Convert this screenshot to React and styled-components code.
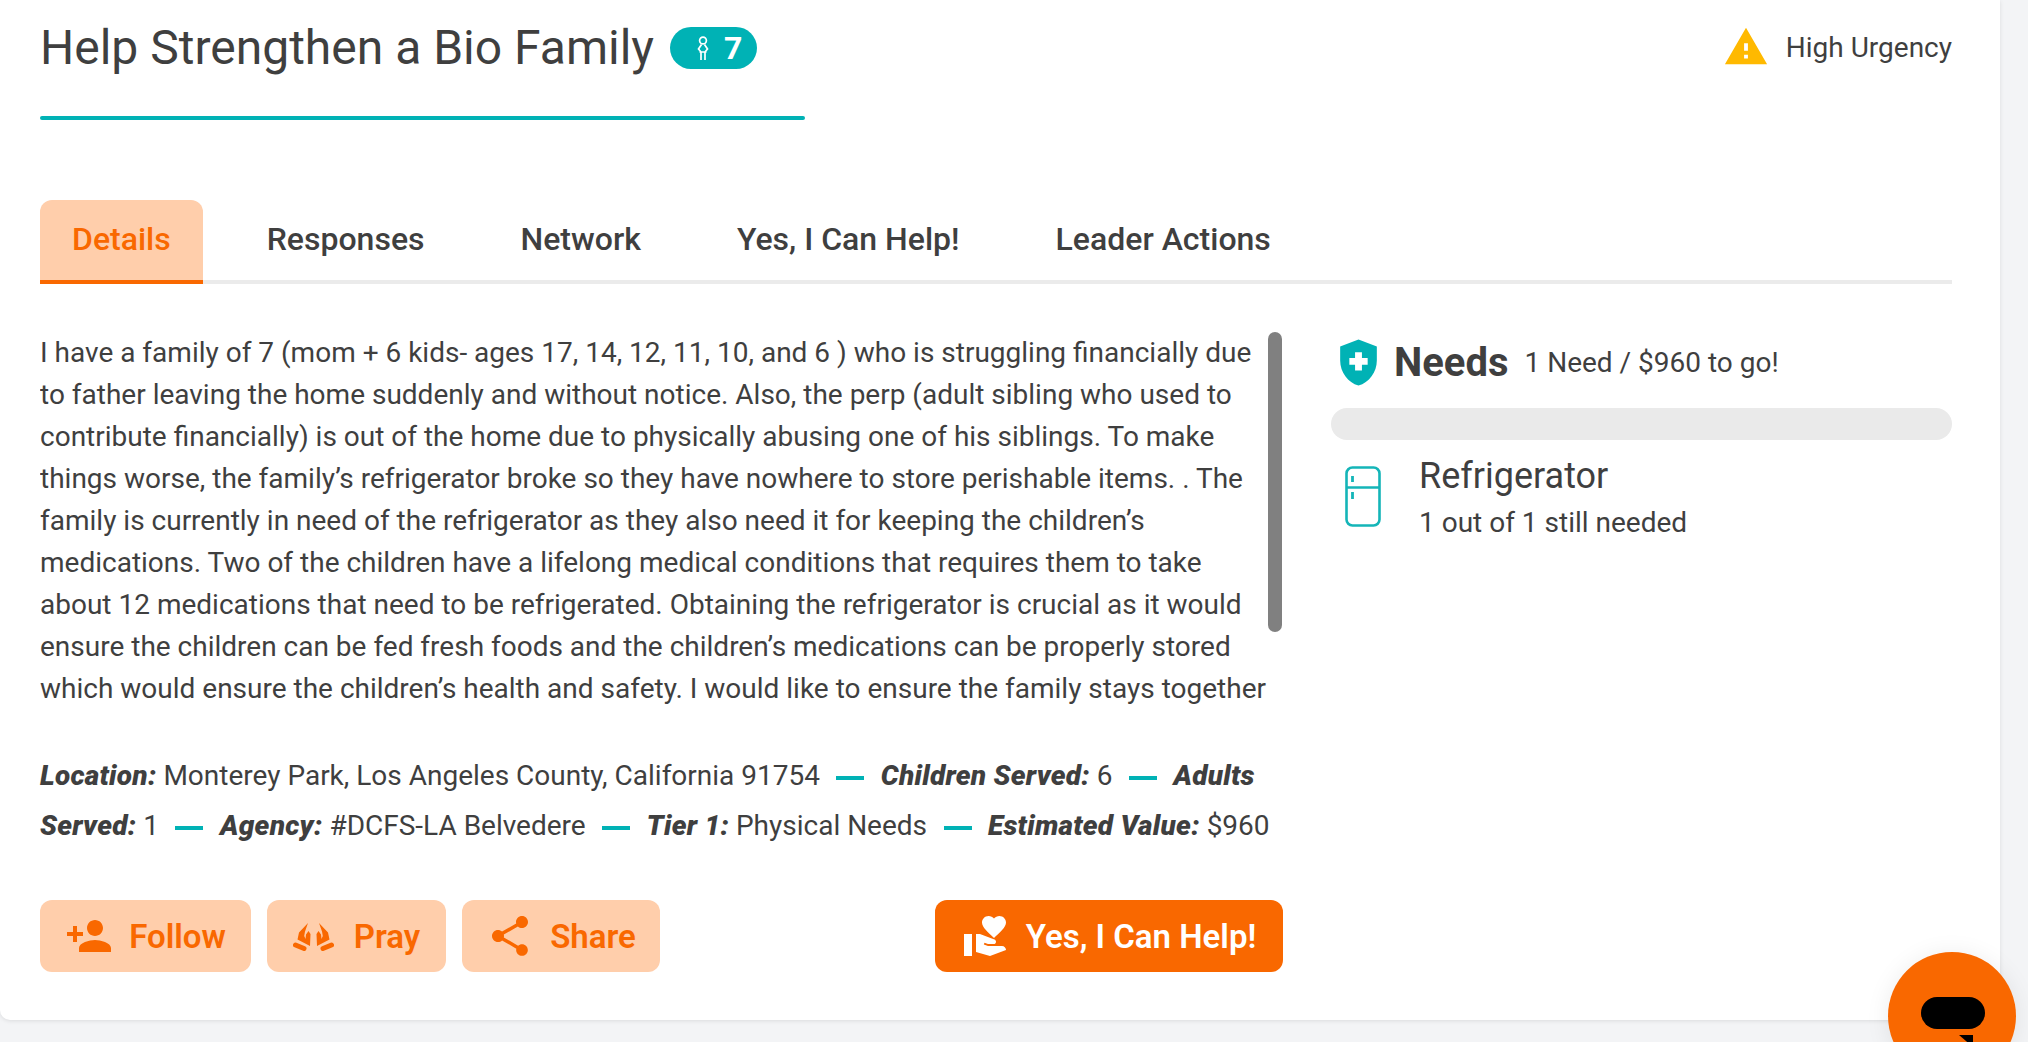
import React from 'react'
import styled, { createGlobalStyle } from 'styled-components'
import { MdPersonAdd, MdShare, MdWarning, MdHealthAndSafety, MdVolunteerActivism } from 'react-icons/md'

const GlobalStyle = createGlobalStyle`
  html, body {
    margin: 0;
    padding: 0;
    height: 100%;
    overflow: hidden;
    background: #f3f4f6;
    font-family: Roboto, "Liberation Sans", sans-serif;
    color: #3f3f3f;
  }
  * { box-sizing: border-box; }
`

const PrayHand = () => (
  <>
    <path d="M15 1L6 10.5 4.5 17.5 17 24l.5-12-2-3-2.5 3.5-.5 4.5-1.3-3 .8-4.5z" />
    <line x1="2.5" y1="23" x2="11" y2="26.5" stroke="currentColor" strokeWidth="5" strokeLinecap="round" />
  </>
)

const PrayIcon = () => (
  <PraySvg width="41" height="29" viewBox="0 0 41 29" fill="currentColor">
    <PrayHand />
    <g transform="matrix(-1 0 0 1 41 0)">
      <PrayHand />
    </g>
  </PraySvg>
)

const ChildIcon = () => (
  <svg width="12" height="24" viewBox="0 0 12 24" fill="none" stroke="#fff" strokeWidth="1.7">
    <circle cx="6" cy="4.5" r="3.4" />
    <path d="M4.5 8.5L1.5 13 4 16M7.5 8.5l3 4.5L8 16M2.5 16h7M4 16v8M8 16v8" />
  </svg>
)

const FridgeIcon = () => (
  <FridgeSvg width="36" height="61" viewBox="0 0 36 61" fill="none" stroke="#14b5b8" strokeWidth="2.6">
    <rect x="1.5" y="1.5" width="33" height="58" rx="6" />
    <path d="M1.5 21.5h33" />
    <path d="M7.5 10v6M7.5 26v7" strokeWidth="2.8" />
  </FridgeSvg>
)

const ChatIcon = () => (
  <ChatSvg width="64" height="50" viewBox="0 0 64 50">
    <rect x="0" y="0" width="64" height="32" rx="16" fill="#000" />
    <path d="M38 38h14v12z" fill="#000" />
  </ChatSvg>
)

function App() {
  return (
    <>
      <GlobalStyle />
      <Page>
        <Card>
          <Header>
            <TitleBlock>
              <TitleRow>
                <Title>Help Strengthen a Bio Family</Title>
                <CountBadge>
                  <ChildIcon />
                  <span>7</span>
                </CountBadge>
              </TitleRow>
              <TitleRule />
            </TitleBlock>
            <Urgency>
              <MdWarning size={46} color="#ffb900" />
              <span>High Urgency</span>
            </Urgency>
          </Header>

          <Tabs>
            <Tab $active>Details</Tab>
            <Tab>Responses</Tab>
            <Tab>Network</Tab>
            <Tab>Yes, I Can Help!</Tab>
            <Tab>Leader Actions</Tab>
          </Tabs>

          <Columns>
            <Main>
              <StoryWrap>
                <Story>
                  I have a family of 7 (mom + 6 kids- ages 17, 14, 12, 11, 10, and 6 ) who is struggling financially due<br />
                  to father leaving the home suddenly and without notice. Also, the perp (adult sibling who used to<br />
                  contribute financially) is out of the home due to physically abusing one of his siblings. To make<br />
                  things worse, the family’s refrigerator broke so they have nowhere to store perishable items. . The<br />
                  family is currently in need of the refrigerator as they also need it for keeping the children’s<br />
                  medications. Two of the children have a lifelong medical conditions that requires them to take<br />
                  about 12 medications that need to be refrigerated. Obtaining the refrigerator is crucial as it would<br />
                  ensure the children can be fed fresh foods and the children’s medications can be properly stored<br />
                  which would ensure the children’s health and safety. I would like to ensure the family stays together
                </Story>
                <ScrollThumb />
              </StoryWrap>

              <Meta>
                <b>Location:</b> Monterey Park, Los Angeles County, California 91754 <Dash /> <b>Children Served:</b> 6 <Dash /> <b>Adults Served:</b> 1 <Dash /> <b>Agency:</b> #DCFS-LA Belvedere <Dash /> <b>Tier 1:</b> Physical Needs <Dash /> <b>Estimated Value:</b> $960
              </Meta>

              <Actions>
                <ActionGroup>
                  <ActionButton $w={211}><MdPersonAdd size={48} />Follow</ActionButton>
                  <ActionButton $w={179}><PrayIcon />Pray</ActionButton>
                  <ActionButton $w={198}><MdShare size={48} />Share</ActionButton>
                </ActionGroup>
                <HelpButton $w={348}><MdVolunteerActivism size={48} />Yes, I Can Help!</HelpButton>
              </Actions>
            </Main>

            <Side>
              <NeedsHeader>
                <MdHealthAndSafety size={55} color="#00b2b5" />
                <NeedsTitle>Needs</NeedsTitle>
                <NeedsSummary>1 Need / $960 to go!</NeedsSummary>
              </NeedsHeader>
              <Progress />
              <NeedRow>
                <FridgeIcon />
                <NeedText>
                  <NeedName>Refrigerator</NeedName>
                  <NeedCount>1 out of 1 still needed</NeedCount>
                </NeedText>
              </NeedRow>
            </Side>
          </Columns>
        </Card>
        <ChatBubble>
          <ChatIcon />
        </ChatBubble>
      </Page>
    </>
  )
}

export default App

const Page = styled.div`
  position: relative;
  width: 2028px;
  height: 1042px;
  overflow: hidden;
`

const Card = styled.div`
  width: 2000px;
  height: 1020px;
  background: #fff;
  border-radius: 0 0 10px 10px;
  box-shadow: 0 1px 4px rgba(0, 0, 0, 0.1);
  padding: 0 48px 0 40px;
`

const Header = styled.div`
  display: flex;
  justify-content: space-between;
  height: 200px;
`

const TitleBlock = styled.div`
  width: 765px;
`

const TitleRow = styled.div`
  display: flex;
  align-items: center;
  height: 96px;
  gap: 16px;
`

const Title = styled.h1`
  margin: 0;
  font-size: 48px;
  font-weight: 400;
  line-height: 96px;
`

const CountBadge = styled.div`
  display: flex;
  align-items: center;
  gap: 15px;
  width: 87px;
  height: 42px;
  padding-left: 27px;
  border-radius: 21px;
  background: #00b2b5;
  color: #fff;
  font-size: 32px;
  font-weight: 700;
`

const TitleRule = styled.div`
  height: 4px;
  margin-top: 20px;
  background: #00b2b5;
  border-radius: 2px;
`

const Urgency = styled.div`
  display: flex;
  align-items: center;
  gap: 17px;
  height: 94px;
  font-size: 28px;
`

const Tabs = styled.div`
  display: flex;
  gap: 32px;
  height: 84px;
  border-bottom: 4px solid #ebebeb;
`

const Tab = styled.div`
  height: 84px;
  padding: 0 32px;
  line-height: 78px;
  font-size: 32px;
  font-weight: 500;
  border-radius: 12px 12px 0 0;
  color: ${(p) => (p.$active ? '#f96800' : '#3f3f3f')};
  background: ${(p) => (p.$active ? '#ffceab' : 'transparent')};
  border-bottom: 4px solid ${(p) => (p.$active ? '#f96800' : 'transparent')};
`

const Columns = styled.div`
  display: flex;
  gap: 48px;
  padding-top: 48px;
`

const Main = styled.div`
  width: 1243px;
`

const StoryWrap = styled.div`
  position: relative;
  height: 378px;
`

const Story = styled.div`
  height: 378px;
  overflow: hidden;
  white-space: nowrap;
  font-size: 28px;
  line-height: 42px;
`

const ScrollThumb = styled.div`
  position: absolute;
  top: 0;
  right: 1px;
  width: 14px;
  height: 300px;
  border-radius: 7px;
  background: #808080;
`

const Meta = styled.div`
  width: 1243px;
  margin-top: 41px;
  font-size: 28px;
  line-height: 50px;
  b {
    font-weight: 900;
    font-style: italic;
    letter-spacing: 0.25px;
  }
`

const Dash = styled.span`
  display: inline-block;
  width: 28px;
  height: 4px;
  margin: 0 9.5px;
  vertical-align: middle;
  background: #00b2b5;
`

const Actions = styled.div`
  display: flex;
  justify-content: space-between;
  margin-top: 49px;
`

const ActionGroup = styled.div`
  display: flex;
  gap: 16px;
`

const ActionButton = styled.div`
  display: flex;
  align-items: center;
  justify-content: center;
  gap: 16px;
  width: ${(p) => p.$w}px;
  height: 72px;
  border-radius: 12px;
  background: #ffceab;
  color: #f96800;
  font-size: 33px;
  font-weight: 600;
`

const HelpButton = styled(ActionButton)`
  background: #f96800;
  color: #fff;
`

const PraySvg = styled.svg`
  margin-right: 4px;
`

const Side = styled.div`
  flex: 1;
`

const NeedsHeader = styled.div`
  display: flex;
  align-items: center;
  gap: 8px;
  height: 60px;
`

const NeedsTitle = styled.div`
  font-size: 40px;
  font-weight: 700;
`

const NeedsSummary = styled.div`
  margin-left: 8px;
  font-size: 28px;
`

const Progress = styled.div`
  height: 32px;
  margin-top: 16px;
  border-radius: 16px;
  background: #eaeaea;
`

const NeedRow = styled.div`
  display: flex;
  align-items: flex-start;
  gap: 38px;
  margin-top: 12px;
  padding-left: 14px;
`

const FridgeSvg = styled.svg`
  flex-shrink: 0;
  margin-top: 14px;
`

const NeedText = styled.div`
  display: flex;
  flex-direction: column;
`

const NeedName = styled.div`
  font-size: 36px;
  line-height: 48px;
`

const NeedCount = styled.div`
  margin-top: 1px;
  font-size: 28px;
  line-height: 44px;
`

const ChatBubble = styled.div`
  position: absolute;
  left: 1888px;
  top: 952px;
  width: 128px;
  height: 128px;
  border-radius: 50%;
  background: #f96800;
  box-shadow: 0 2px 24px rgba(0, 0, 0, 0.08);
`

const ChatSvg = styled.svg`
  position: absolute;
  left: 33px;
  top: 45px;
`
